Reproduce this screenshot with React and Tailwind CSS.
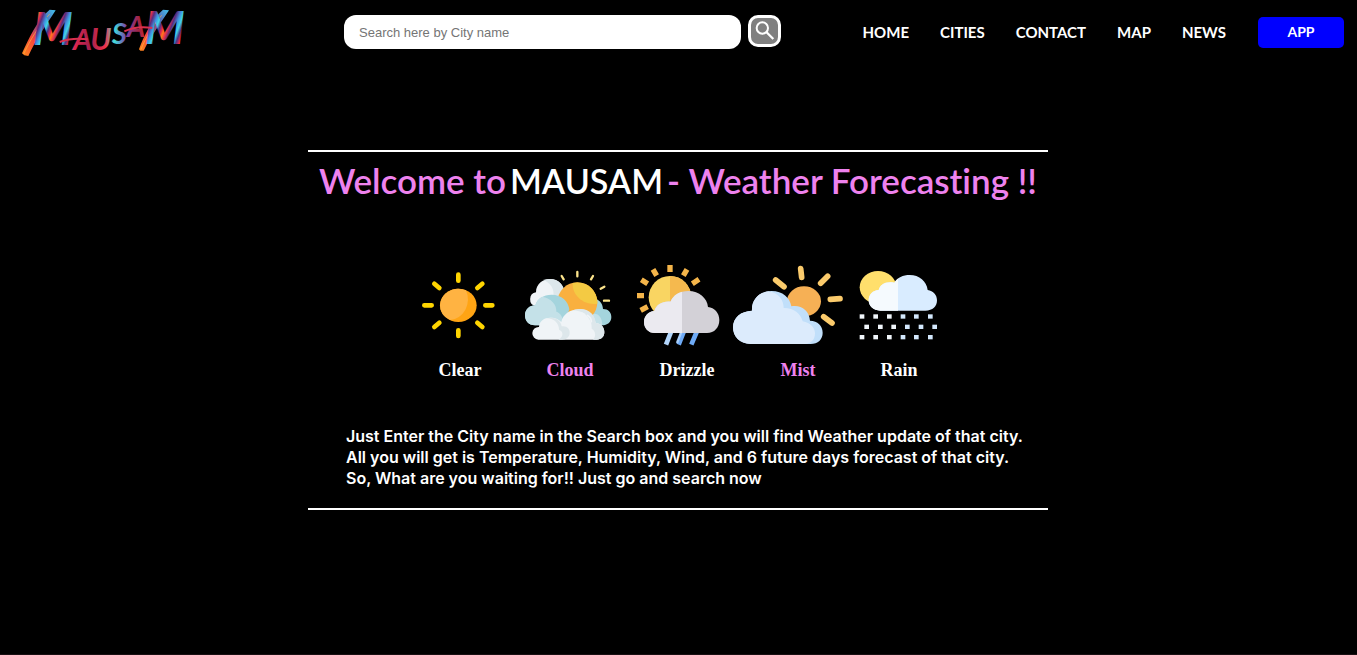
import React from "react";

const NAV_LINKS = ["HOME", "CITIES", "CONTACT", "MAP", "NEWS"];

function Logo() {
  return (
    <svg viewBox="39 0 486 192" className="h-16 w-[162px] overflow-visible" role="img" aria-label="Mausam">
      <defs>
        <linearGradient id="brush" gradientUnits="userSpaceOnUse" x1="78" y1="60" x2="136" y2="82" spreadMethod="repeat">
          <stop offset="0" stopColor="#ff7a1a" />
          <stop offset="0.14" stopColor="#e8304a" />
          <stop offset="0.28" stopColor="#5a2a7c" />
          <stop offset="0.46" stopColor="#3f8fe0" />
          <stop offset="0.62" stopColor="#3fd6e6" />
          <stop offset="0.76" stopColor="#4b3585" />
          <stop offset="0.9" stopColor="#e0264f" />
          <stop offset="1" stopColor="#ff7a1a" />
        </linearGradient>
        <linearGradient id="inner" gradientUnits="userSpaceOnUse" x1="170" y1="0" x2="430" y2="0">
          <stop offset="0" stopColor="#27c9d8" />
          <stop offset="0.1" stopColor="#e0264f" />
          <stop offset="0.28" stopColor="#a3204d" />
          <stop offset="0.46" stopColor="#f0324a" />
          <stop offset="0.56" stopColor="#3fe0dc" />
          <stop offset="0.7" stopColor="#7a3fa8" />
          <stop offset="0.85" stopColor="#a3243f" />
          <stop offset="1" stopColor="#f0323c" />
        </linearGradient>
        <linearGradient id="tail" x1="0" y1="1" x2="1" y2="0">
          <stop offset="0" stopColor="#ff8a1c" />
          <stop offset="0.35" stopColor="#f4453a" />
          <stop offset="0.65" stopColor="#5b4fa8" />
          <stop offset="1" stopColor="#3fc6ee" />
        </linearGradient>
      </defs>
      <path d="M39 160C58 118 84 60 122 29L140 31C112 74 80 120 58 168L46 166Z" fill="url(#tail)" />
      <path d="M44 162C62 122 90 76 122 42" fill="none" stroke="#ffb23e" strokeWidth="2" />
      <path d="M390 148C404 108 430 56 462 29L480 31C454 70 424 112 404 152L394 152Z" fill="url(#tail)" />
      <path d="M396 148C410 112 432 76 458 46" fill="none" stroke="#ffb23e" strokeWidth="2" />
      <text
        fontFamily="Lato, sans-serif"
        fontStyle="italic"
        fontWeight="900"
        fontSize="134"
        fill="url(#brush)"
      >
        <tspan x="72" y="136">M</tspan>
        <tspan x="192" y="151" fontSize="88" fontWeight="700" fill="url(#inner)">A</tspan>
        <tspan x="244" y="151" fontSize="92" fontWeight="700" fill="url(#inner)">U</tspan>
        <tspan x="308" y="132" fontSize="88" fontWeight="700" fill="url(#inner)">S</tspan>
        <tspan x="354" y="112" fontSize="84" fontWeight="700" fill="url(#inner)">A</tspan>
        <tspan x="408" y="133">M</tspan>
      </text>
      <path d="M152 126Q190 112 236 118M346 94Q384 76 430 84" fill="none" stroke="#d8304f" strokeWidth="6" />
    </svg>
  );
}

function ClearIcon() {
  return (
    <svg viewBox="-15 27 330 246" className="h-[82px] w-[110px] shrink-0" aria-hidden="true">
      <ellipse cx="145" cy="151" rx="55" ry="50" fill="#ffa414" />
      <path d="M90 151A55 50 0 0 1 168 106A58 62 0 0 1 120 195A55 50 0 0 1 90 151Z" fill="#ffb342" />
      <g stroke="#ffd500" strokeWidth="14" strokeLinecap="round">
        <path d="M145 59V77M145 226V243M43 151H65M226 151H247M73 86L88 99M217 86L202 99M73 216L88 203M217 216L202 203" />
      </g>
    </svg>
  );
}

function CloudIcon() {
  return (
    <svg viewBox="315 27 330 246" className="h-[82px] w-[110px] shrink-0" aria-hidden="true">
      <path d="M376 153A21 21 0 0 1 378 112C378 87 398 72 421 72C446 72 461 90 464 112L450 153Z" fill="#f0f4f7" />
      <path d="M399 75C440 64 462 88 464 114L455 140L430 122C434 105 422 82 399 75Z" fill="#dde7eb" />
      <path d="M558 132C572 138 578 148 579 162C595 162 604 172 604 186C604 202 592 211 576 211H510V160Z" fill="#a4d4dd" />
      <path d="M545 178C562 172 576 184 577 210H540Z" fill="#c4e1e8" />
      <circle cx="502" cy="142" r="60" fill="#f9b03f" />
      <path d="M488 84A60 60 0 0 1 562 146C522 152 486 122 488 84Z" fill="#f4ca43" />
      <path d="M375 211C355 211 345 197 345 181C345 163 359 151 376 151C381 132 400 119 425 119C455 119 475 139 478 163L462 211Z" fill="#a4d4dd" />
      <path d="M375 211C355 211 345 197 345 181C345 163 359 151 376 151C379 139 386 130 396 125C424 130 440 148 439 170C451 174 459 184 462 211Z" fill="#c4e1e8" />
      <path d="M385 254A19 19 0 0 1 387 216C388 198 402 188 421 188C438 188 447 194 454 201C458 179 480 163 507 163C534 163 553 179 557 204C574 205 583 217 583 231C583 245 574 254 560 254Z" fill="#f0f4f7" />
      <path d="M487 167C532 151 556 179 557 204C574 205 583 217 583 231C583 245 574 254 560 254H549C558 246 558 228 545 221C548 193 522 164 487 167Z" fill="#dde7eb" />
      <path d="M410 190C438 183 453 199 455 214C470 211 480 222 479 234C478 246 470 254 456 254H445C460 246 462 230 447 224C448 207 433 190 410 190Z" fill="#dde7eb" />
      <path d="M505 173Q515 172 524 178M532 181Q544 188 544 200" fill="none" stroke="#f0f4f7" strokeWidth="5" strokeLinecap="round" />
      <path d="M502 51V64M455 63L461 73M549 63L543 73M583 95L572 101M582 137H597" stroke="#fbe38b" strokeWidth="7" strokeLinecap="round" />
    </svg>
  );
}

function DrizzleIcon() {
  return (
    <svg viewBox="15 27 372 246" className="h-[82px] w-[124px] shrink-0" aria-hidden="true">
      <path d="M150 30V51M99 43L110 62M201 43L190 62M64 74L83 86M237 73L217 86M51 122H72M62 166L83 155" stroke="#f5b54a" strokeWidth="16" />
      <circle cx="150" cy="127" r="64" fill="#f9d562" />
      <path d="M150 63A64 64 0 0 1 150 191Z" fill="#f5b94e" />
      <path d="M153 231L138 269" stroke="#b3d6fb" strokeWidth="14" />
      <path d="M191 231L176 269M230 231L214 269" stroke="#6eaaf6" strokeWidth="14" />
      <path d="M184 231L171 264" stroke="#a9cffb" strokeWidth="7" />
      <path d="M105 234C84 234 72 219 72 201C72 183 86 168 103 168C109 149 127 138 151 140C160 120 180 108 205 108C238 108 262 130 264 156C283 158 298 174 298 195C298 218 283 234 261 234Z" fill="#d3d1d7" />
      <path d="M105 234C84 234 72 219 72 201C72 183 86 168 103 168C109 149 127 138 151 140C158 124 170 114 186 110V234Z" fill="#ebeaf0" />
    </svg>
  );
}

function MistIcon() {
  return (
    <svg viewBox="339 27 390 246" className="h-[82px] w-[130px] shrink-0" aria-hidden="true">
      <path d="M542 41L545 67M623 64L602 85M467 75L492 95M631 133L660 131M611 185L636 204" stroke="#fbcb6c" strokeWidth="17" strokeLinecap="round" />
      <ellipse cx="552" cy="139" rx="51" ry="45" fill="#f6b055" />
      <path d="M392 267C359 267 339 244 339 217C339 188 363 168 396 167C394 132 421 108 455 108C488 108 510 128 514 154C542 148 568 166 570 197C593 197 608 213 608 233C608 253 594 267 572 267Z" fill="#c1dffa" />
      <path d="M392 267C359 267 339 244 339 217C339 188 363 168 396 167C394 136 416 112 445 109C475 113 491 134 491 159C520 158 542 175 548 199C572 204 585 218 585 235C585 253 574 267 555 267Z" fill="#dcebfc" />
    </svg>
  );
}

function RainIcon() {
  const dots = [
    [184, [51, 92, 133, 174, 214, 256]],
    [215, [65, 106, 146, 187, 228, 269]],
    [246, [51, 92, 133, 174, 214, 256]],
  ];
  return (
    <svg viewBox="6 27 312 246" className="h-[82px] w-[104px] shrink-0" aria-hidden="true">
      <ellipse cx="99" cy="97" rx="55" ry="49" fill="#ffdf6c" />
      <path d="M106 167C85 167 71 153 71 136C71 118 84 106 101 105C105 89 121 78 148 83C157 68 174 60 194 60C223 60 245 79 248 105C265 108 276 120 276 136C276 154 263 167 241 167Z" fill="#d9ecff" />
      <path d="M106 167C85 167 71 153 71 136C71 118 84 106 101 105C105 89 121 78 148 83Q152 76 159 71V167Z" fill="#f5fafe" />
      {dots.map(([y, xs]) =>
        xs.map((x) => (
          <rect key={`${x}-${y}`} x={x - 7} y={y - 6} width="14" height="13" fill={x < 160 ? "#f1f6fb" : "#d3e8fd"} />
        ))
      )}
    </svg>
  );
}

const WEATHER = [
  { label: "Clear", Icon: ClearIcon, style: "w-[110px] text-white" },
  { label: "Cloud", Icon: CloudIcon, style: "w-[110px] text-[#ee82ee]" },
  { label: "Drizzle", Icon: DrizzleIcon, style: "w-[124px] text-white" },
  { label: "Mist", Icon: MistIcon, style: "w-[98px] text-[#ee82ee]" },
  { label: "Rain", Icon: RainIcon, style: "w-[104px] text-white" },
];

export default function App() {
  return (
    <div className="min-h-screen border-b border-[#190f13] bg-black pr-px font-[Lato,sans-serif] text-white">
      <header className="flex h-16 items-center pr-3 pl-[22px]">
        <a href="#home" className="shrink-0">
          <Logo />
        </a>
        <form className="ml-40 flex max-w-[437px] flex-1 items-start gap-[7px]" onSubmit={(e) => e.preventDefault()}>
          <input
            type="text"
            aria-label="City name"
            placeholder="Search here by City name"
            className="h-[34px] min-w-0 flex-1 rounded-xl bg-white px-[15px] font-['Liberation_Sans',sans-serif] text-[13px] text-black outline-none placeholder:text-[#757575]"
          />
          <button
            type="submit"
            aria-label="Search"
            className="flex h-8 w-[33px] items-center justify-center rounded-[10px] border-3 border-white bg-[#808080]"
          >
            <svg viewBox="0 0 60 60" className="size-5" fill="none" stroke="#fff" strokeWidth="6" aria-hidden="true">
              <circle cx="22" cy="21" r="17" />
              <path d="M34 33L55 54" strokeWidth="7" />
            </svg>
          </button>
        </form>
        <nav className="ml-auto flex shrink-0 items-center gap-8 font-bold">
          <div className="flex gap-[31px] text-[15px] leading-6">
            {NAV_LINKS.map((link) => (
              <a key={link} href={`#${link.toLowerCase()}`}>
                {link}
              </a>
            ))}
          </div>
          <button type="button" className="h-[31px] w-[86px] rounded-[5px] bg-[#0000ff] text-sm font-bold">
            APP
          </button>
        </nav>
      </header>

      <main className="mx-auto mt-[86px] flex max-w-[740px] flex-col border-y-2 border-white pt-1.5 pb-[19px]">
        <h1 className="flex items-baseline justify-center gap-1 text-[35px] leading-[44px] font-semibold whitespace-nowrap text-[#ee82ee] [font-variant-ligatures:none]">
          <span>Welcome to</span> <span className="text-[34px] text-white">MAUSAM</span>{" "}
          <span>- Weather Forecasting !!</span>
        </h1>

        <ul className="mt-[61px] flex justify-center">
          {WEATHER.map(({ label, Icon, style }) => (
            <li key={label} className={`flex flex-col items-center ${style}`}>
              <Icon />
              <span className="mt-3 font-['Liberation_Serif',serif] text-lg leading-6 font-bold">{label}</span>
            </li>
          ))}
        </ul>

        <p className="mt-11 pl-[38px] font-[Inter,sans-serif] text-base leading-[21px] font-semibold whitespace-nowrap">
          Just Enter the City name in the Search box and you will find Weather update of that city.
          <br />
          All you will get is Temperature, Humidity, Wind, and 6 future days forecast of that city.
          <br />
          So, What are you waiting for!! Just go and search now
        </p>
      </main>
    </div>
  );
}
